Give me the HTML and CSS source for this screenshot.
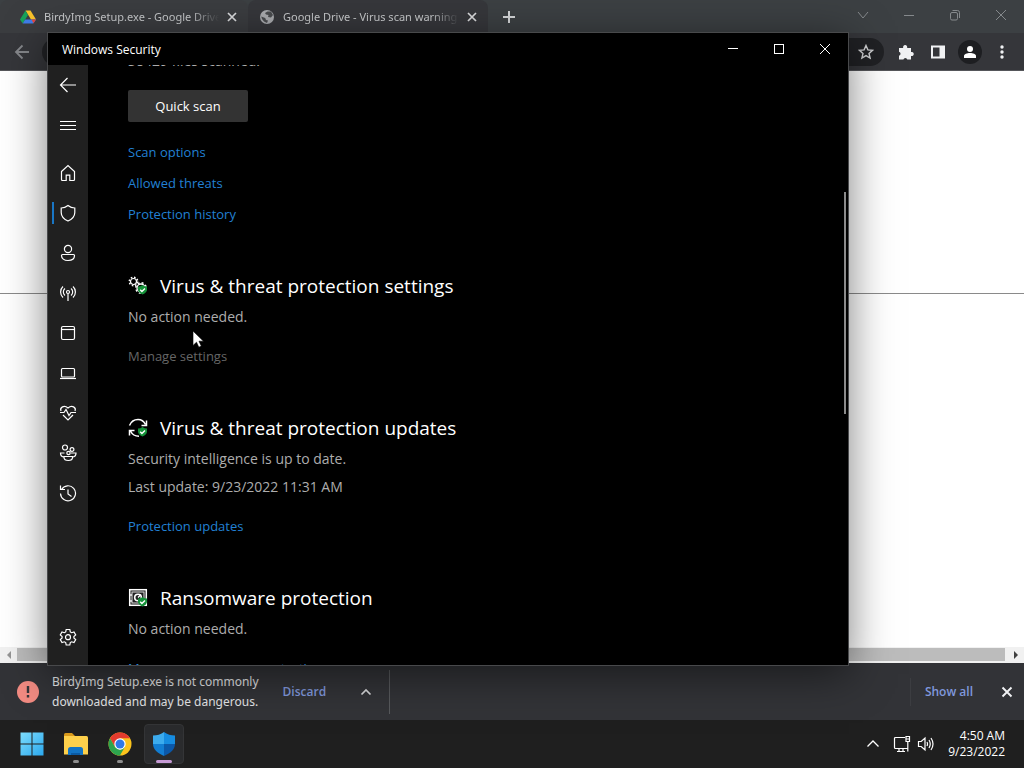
FILE: index.html
```html
<!DOCTYPE html>
<html lang="en">
<head>
<meta charset="utf-8">
<title>Windows Security</title>
<link rel="stylesheet" href="styles.css">
</head>
<body>
<div class="desktop">
  <div class="browser">
    <header class="tabstrip">
      <div class="tab tab-active">
        <svg class="favicon" viewBox="0 0 16 16"><path d="M5.500 1.500h5L16 10.500h-5z" fill="#f9c32b"/><path d="M5.500 1.500 8 6 2.700 14.500 0 10.500z" fill="#18a35a"/><path d="M5.200 10.500H16l-2.700 4H2.700z" fill="#3f7de8"/><path d="M13.500 14.300 16 10.500h-4.500z" fill="#e8453c"/></svg>
        <span class="tab-title">BirdyImg Setup.exe - Google Drive</span>
        <button class="icon-btn tab-close" aria-label="Close tab"><svg width="10" height="10" viewBox="0 0 10 10"><path d="M1 1l8 8M9 1l-8 8" stroke="#dcdddf" stroke-width="1.700"/></svg></button>
      </div>
      <div class="tab">
        <svg class="favicon" viewBox="0 0 16 16"><circle cx="8" cy="8" r="7" fill="#a9abae"/><path d="M8.500 2.500 6 4l1 1.500 2.500.5-.5 2 3 .5 2-2.500-2-3.500zM2.200 7.500l4 1.500.8 2 2 .5-1 2.500-3-1.500-2-2.500z" fill="#4a4c4f"/></svg>
        <span class="tab-title">Google Drive - Virus scan warning</span>
        <button class="icon-btn tab-close" aria-label="Close tab"><svg width="10" height="10" viewBox="0 0 10 10"><path d="M1 1l8 8M9 1l-8 8" stroke="#dcdddf" stroke-width="1.700"/></svg></button>
      </div>
      <button class="icon-btn new-tab" aria-label="New tab"><svg width="14" height="14" viewBox="0 0 14 14"><path d="M7 1v12M1 7h12" stroke="#d5d7d9" stroke-width="2"/></svg></button>
      <div class="browser-controls">
        <button class="icon-btn caption-btn" aria-label="Search tabs"><svg width="12" height="12" viewBox="0 0 12 12"><path d="M1 3l5 6 5-6" class="dim"/></svg></button>
        <button class="icon-btn caption-btn" aria-label="Minimize"><svg width="12" height="12" viewBox="0 0 12 12"><path d="M1 6.500h10" class="dim"/></svg></button>
        <button class="icon-btn caption-btn" aria-label="Restore"><svg width="12" height="12" viewBox="0 0 12 12"><rect x="1.500" y="3.500" width="7" height="7.500" rx="1.500" class="dim"/><path d="M3.500 1.500h5a2 2 0 0 1 2 2V9" class="dim"/></svg></button>
        <button class="icon-btn caption-btn" aria-label="Close"><svg width="12" height="12" viewBox="0 0 12 12"><path d="M1 1l10 10M11 1L1 11" class="dim"/></svg></button>
      </div>
    </header>
    <div class="toolbar">
      <button class="icon-btn tool-btn" aria-label="Back"><svg width="16" height="16" viewBox="0 0 16 16"><path d="M15 8H2M8.500 1.500 2 8l6.500 6.500" stroke="#84868a" stroke-width="1.800" fill="none"/></svg></button>
      <div class="omnibox">
        <button class="icon-btn tool-btn" aria-label="Bookmark"><svg width="16" height="16" viewBox="0 0 16 16"><path d="m8 1.500 1.900 4.400 4.700.4-3.600 3.100 1.100 4.700L8 11.600l-4.100 2.500L5 9.400 1.400 6.300l4.700-.4z" stroke="#d0d1d3" stroke-width="1.400" fill="none"/></svg></button>
      </div>
      <button class="icon-btn tool-btn" aria-label="Extensions"><svg width="16" height="16" viewBox="0 0 16 16"><path d="M1 4h4.200a2.100 2.100 0 1 1 3.900 0H13v4a2.100 2.100 0 1 1 0 4v3.500H9.300a2 2 0 0 0-3.900 0H1v-3.800a2 2 0 0 0 0-3.900z" fill="#f1f2f4"/></svg></button>
      <button class="icon-btn tool-btn" aria-label="Side panel"><svg width="16" height="16" viewBox="0 0 16 16"><path d="M1 1.500h14v13H1zM3 3.500v9h6.500v-9z" fill="#f1f2f4" fill-rule="evenodd"/></svg></button>
      <button class="icon-btn tool-btn avatar" aria-label="Profile"><svg width="14" height="14" viewBox="0 0 14 14"><circle cx="7" cy="4" r="3" fill="#fff"/><path d="M1 13v-2c0-2 3-3 6-3s6 1 6 3v2z" fill="#fff"/></svg></button>
      <button class="icon-btn tool-btn" aria-label="Menu"><svg width="16" height="16" viewBox="0 0 16 16"><g fill="#f1f2f4"><circle cx="8" cy="3" r="1.700"/><circle cx="8" cy="8" r="1.700"/><circle cx="8" cy="13" r="1.700"/></g></svg></button>
    </div>
    <main class="page"><hr class="rule"></main>
    <div class="hscroll">
      <button class="icon-btn hs-btn" aria-label="Scroll left"><svg width="6" height="8" viewBox="0 0 6 8"><path d="M5 0v8L1 4z" fill="#949494"/></svg></button>
      <div class="hs-thumb"></div>
      <button class="icon-btn hs-btn" aria-label="Scroll right"><svg width="6" height="8" viewBox="0 0 6 8"><path d="M1 0v8l4-4z" fill="#404040"/></svg></button>
    </div>
    <section class="downloads">
      <svg class="warn" viewBox="0 0 22 22"><circle cx="11" cy="11" r="11" fill="#f28b82"/><path d="M11 5v7M11 14v2.500" stroke="#35363a" stroke-width="2.400"/></svg>
      <p class="dl-text">BirdyImg Setup.exe is not commonly<br>downloaded and may be dangerous.</p>
      <button class="text-btn discard">Discard</button>
      <button class="icon-btn dl-more" aria-label="More options"><svg width="12" height="8" viewBox="0 0 12 8"><path d="M1.500 6.500 6 2l4.500 4.500" stroke="#d8d9db" stroke-width="1.700" fill="none"/></svg></button>
      <div class="show-wrap">
        <button class="text-btn">Show all</button>
        <button class="icon-btn dl-close" aria-label="Close downloads"><svg width="12" height="12" viewBox="0 0 12 12"><path d="M1.500 1.500l9 9M10.500 1.500l-9 9" stroke="#f1f2f4" stroke-width="1.900"/></svg></button>
      </div>
    </section>
  </div>

  <footer class="taskbar">
    <nav class="apps">
      <button class="icon-btn app" aria-label="Start"><svg width="24" height="24" viewBox="0 0 24 24"><defs><linearGradient id="win" x2="1" y2="1"><stop stop-color="#7ddcfb"/><stop offset="1" stop-color="#2ba8ee"/></linearGradient></defs><path d="M.5.5h11v11H.500zM12.500.5h11v11h-11zM.5 12.500h11v11H.500zM12.500 12.500h11v11h-11z" fill="url(#win)"/></svg></button>
      <button class="icon-btn app running" aria-label="File Explorer"><svg width="26" height="24" viewBox="0 0 26 24"><path d="M1 2.500Q1 1 2.500 1H9l3 3H1z" fill="#d99a1c"/><path d="M1 4h22.500Q25 4 25 5.500V22.500H1z" fill="#fdd04b"/><path d="M5 23v-5.500Q5 15 7.500 15h10q2.500 0 2.500 2.500V23z" fill="#1374c4"/><path d="M8 21h9v2H8z" fill="#0b5aa2"/></svg></button>
      <button class="icon-btn app running" aria-label="Chrome"><svg width="24" height="24" viewBox="0 0 24 24"><circle cx="12" cy="12" r="11.500" fill="#fbc31c"/><path d="M2 6.300A11.500 11.500 0 0 1 22 6.300H12L7 14.900z" fill="#e33b2e"/><path d="M2 6.300 7 14.900 12 17.700 16.900 15 11.900 23.500A11.500 11.500 0 0 1 2 6.300z" fill="#2da44e"/><circle cx="12" cy="12" r="5.700" fill="#fff"/><circle cx="12" cy="12" r="4.500" fill="#2f79e6"/></svg></button>
      <button class="icon-btn app current" aria-label="Windows Security"><svg width="24" height="24" viewBox="0 0 24 24"><path d="M12 0C9 2.500 5 3.500 1 3.500V12h11z" fill="#3cabed"/><path d="M12 0c3 2.500 7 3.500 11 3.500V12H12z" fill="#168ce0"/><path d="M1 12h11v12C5 21 1 17 1 12z" fill="#127dd2"/><path d="M23 12H12v12c7-3 11-7 11-12z" fill="#0b58a9"/></svg></button>
    </nav>
    <div class="tray">
      <button class="icon-btn" aria-label="Show hidden icons"><svg width="14" height="10" viewBox="0 0 14 10"><path d="M1.500 7.500 7 2l5.500 5.500" stroke="#fff" stroke-width="1.300" fill="none"/></svg></button>
      <div class="status">
        <svg width="18" height="18" viewBox="0 0 18 18" class="tray-icon"><path d="M12 2.500H2.500a1 1 0 0 0-1 1v9a1 1 0 0 0 1 1H15M6 13.500v3M10 13.500v3M4 16.500h8M13 1.500h3.500v5H13zM13 4h3.500M14.800 6.500v10"/></svg>
        <svg width="18" height="18" viewBox="0 0 18 18" class="tray-icon"><path d="M1.500 6.500h2.700L8 3v12l-3.800-3.500H1.500zM10 7q1 2 0 4M12 5q2.500 4 0 8M14 3q4 6 0 12"/></svg>
      </div>
      <time class="clock">4:50 AM<br>9/23/2022</time>
    </div>
  </footer>

  <div class="window">
    <header class="titlebar">
      <h1 class="win-title">Windows Security</h1>
      <button class="icon-btn win-btn" aria-label="Minimize"><svg width="12" height="12" viewBox="0 0 12 12"><path d="M1 5.500h10" class="bright"/></svg></button>
      <button class="icon-btn win-btn" aria-label="Maximize"><svg width="12" height="12" viewBox="0 0 12 12"><rect x="1.500" y="1.500" width="9" height="9" class="bright"/></svg></button>
      <button class="icon-btn win-btn" aria-label="Close"><svg width="12" height="12" viewBox="0 0 12 12"><path d="M1 1l10 10M11 1L1 11" class="bright"/></svg></button>
    </header>
    <div class="win-body">
      <nav class="sidebar">
        <button class="icon-btn side-btn" aria-label="Back"><svg viewBox="0 0 18 18"><path d="M17 9H1.500M8.500 2l-7 7 7 7"/></svg></button>
        <button class="icon-btn side-btn menu-btn" aria-label="Open navigation"><svg viewBox="0 0 18 18"><path d="M1 5.500h16M1 9.500h16M1 13.500h16"/></svg></button>
        <button class="icon-btn side-btn" aria-label="Home"><svg viewBox="0 0 18 18"><path d="M2.500 7.500 9 1.500l6.500 6v8a1 1 0 0 1-1 1h-3.700v-5.300H7.200v5.300H3.500a1 1 0 0 1-1-1z"/></svg></button>
        <button class="icon-btn side-btn selected" aria-label="Virus &amp; threat protection"><svg viewBox="0 0 18 18"><path d="M9 1.500Q12 4 15.800 4v4.500Q15.800 14 9 17 2.200 14 2.200 8.500V4Q6 4 9 1.500z"/></svg></button>
        <button class="icon-btn side-btn" aria-label="Account protection"><svg viewBox="0 0 18 18"><circle cx="9" cy="5" r="3.600"/><path d="M3.500 10.500h11a1 1 0 0 1 1 1c0 3-2.500 5-6.500 5s-6.500-2-6.500-5a1 1 0 0 1 1-1z"/></svg></button>
        <button class="icon-btn side-btn" aria-label="Firewall &amp; network protection"><svg viewBox="0 0 18 18"><circle cx="9" cy="8" r="1.500"/><path d="M9 9.500V17M6 11.500a4.500 4.500 0 0 1 0-7M12 11.500a4.500 4.500 0 0 0 0-7M4 13.500a7.500 7.500 0 0 1 0-11M14 13.500a7.500 7.500 0 0 0 0-11"/></svg></button>
        <button class="icon-btn side-btn" aria-label="App &amp; browser control"><svg viewBox="0 0 18 18"><rect x="2.500" y="2.500" width="13" height="13" rx="1.500"/><path d="M2.500 5.500h13"/></svg></button>
        <button class="icon-btn side-btn" aria-label="Device security"><svg viewBox="0 0 18 18"><rect x="2.500" y="4.500" width="13" height="8.500" rx="1"/><path d="M1 14.500h16"/></svg></button>
        <button class="icon-btn side-btn" aria-label="Device performance &amp; health"><svg viewBox="0 0 18 18"><path d="M2 7C.5 3.500 5 .500 9 4 13 .500 17.500 3.500 16 7M1 8.500h4l2-3 3 6 2-3h5M4 11l5 5 5-5"/></svg></button>
        <button class="icon-btn side-btn" aria-label="Family options"><svg viewBox="0 0 18 18"><circle cx="6" cy="3.500" r="2.500"/><circle cx="13" cy="5.500" r="1.900"/><circle cx="9.500" cy="9" r="1.700"/><path d="M5 12.500h8.500v1q0 3-4.200 3T5 13.500zM5.500 9H1.500q0 3.500 3 4M12 9h5q0 3.500-3 4"/></svg></button>
        <button class="icon-btn side-btn" aria-label="Protection history"><svg viewBox="0 0 18 18"><path d="M2.500 5.500A7.500 7.500 0 1 1 1.500 9.500M1.500 1.500v4h4.500M9 5.500V10l3.500 2.500"/></svg></button>
        <button class="icon-btn side-btn settings-btn" aria-label="Settings"><svg viewBox="0 0 18 18"><path d="M7.200 1.500h3.600l.5 2.400 1.300.8 2.400-.8 1.700 3-1.800 1.600v1.500l1.800 1.600-1.700 3-2.400-.8-1.300.8-.5 2.400H7.200l-.5-2.400-1.300-.8-2.400.8-1.700-3L3.100 10V8.500L1.300 6.900l1.700-3 2.400.8 1.300-.8z"/><circle cx="9" cy="9.200" r="2.500"/></svg></button>
      </nav>
      <div class="content">
        <p class="files">38429 files scanned.</p>
        <button class="scan-btn">Quick scan</button>
        <div class="links">
          <a href="#">Scan options</a>
          <a href="#">Allowed threats</a>
          <a href="#">Protection history</a>
        </div>
        <section class="group">
          <h2><svg class="head-icon" viewBox="0 0 20 20"><circle cx="5.500" cy="5.500" r="3" stroke="#fff" stroke-width="1.200" fill="none"/><circle cx="5.500" cy="5.500" r="4.200" stroke="#fff" stroke-width="1.500" stroke-dasharray="1.600 1.700" fill="none"/><circle cx="13" cy="12" r="4" stroke="#fff" stroke-width="1.300" fill="none"/><circle cx="13" cy="12" r="5.200" stroke="#fff" stroke-width="1.500" stroke-dasharray="2 2.080" fill="none"/><path d="M14.500 9q2 1.500 4.500 1.500v3q0 3-4.500 5-4.500-2-4.500-5v-3Q12.500 10.500 14.500 9z" fill="#149138"/><path d="m12.200 13.800 1.700 1.700 3.100-3.100" stroke="#fff" stroke-width="1.400" fill="none"/></svg>Virus &amp; threat protection settings</h2>
          <p>No action needed.</p>
          <a href="#" class="disabled" aria-disabled="true">Manage settings</a>
        </section>
        <section class="group">
          <h2><svg class="head-icon" viewBox="0 0 20 20"><path d="M1.500 7.500Q4 1.500 10 1.500q5 0 7.500 5M18.500 2.500v5h-5M1.500 17.500v-5h5M2.500 13Q5 18.300 11 18.300" stroke="#fff" stroke-width="1.500" fill="none"/><path d="M14.500 9q2 1.500 4.500 1.500v3q0 3-4.500 5-4.500-2-4.500-5v-3Q12.500 10.500 14.500 9z" fill="#149138"/><path d="m12.200 13.800 1.700 1.700 3.100-3.100" stroke="#fff" stroke-width="1.400" fill="none"/></svg>Virus &amp; threat protection updates</h2>
          <p>Security intelligence is up to date.</p>
          <p>Last update: 9/23/2022 11:31 AM</p>
          <a href="#">Protection updates</a>
        </section>
        <section class="group">
          <h2><svg class="head-icon" viewBox="0 0 20 20"><rect x="1.700" y="1.700" width="16.600" height="15.600" stroke="#fff" stroke-width="1.500" fill="#222"/><rect x="4" y="4" width="12" height="11" stroke="#ddd" fill="none"/><circle cx="10" cy="9.500" r="3.300" stroke="#fff" stroke-width="1.600" fill="none"/><path d="M10 9.500l3-3M3 6v2M3 12v2" stroke="#fff" stroke-width="1.300"/><path d="M14.500 9q2 1.500 4.500 1.500v3q0 3-4.500 5-4.500-2-4.500-5v-3Q12.500 10.500 14.500 9z" fill="#149138"/><path d="m12.200 13.800 1.700 1.700 3.100-3.100" stroke="#fff" stroke-width="1.400" fill="none"/></svg>Ransomware protection</h2>
          <p>No action needed.</p>
          <a href="#">Manage ransomware protection</a>
        </section>
      </div>
      <div class="vscroll"></div>
    </div>
  </div>
  <svg class="cursor" viewBox="0 0 12 18"><path d="M1 1v14.500l3.500-3.300 2.300 5 2.500-1.100-2.300-4.900H11.500z" fill="#fff" stroke="#000" stroke-width=".6"/></svg>
</div>
</body>
</html>
```
FILE: styles.css
```css
* { box-sizing: border-box; }

body {
  margin: 0;
  font-family: "Open Sans", "Noto Sans", sans-serif;
  font-size: 13px;
  line-height: 20px;
}

button { font: inherit; color: inherit; }
p, h1, h2 { margin: 0; font-weight: 400; }
a { color: #2280d4; text-decoration: none; }

.icon-btn {
  display: flex;
  align-items: center;
  justify-content: center;
  flex: none;
  padding: 0;
  border: 0;
  background: none;
}

.desktop {
  position: relative;
  display: flex;
  flex-direction: column;
  height: 100vh;
  overflow: hidden;
}

/* Browser */
.browser { flex: 1; display: flex; flex-direction: column; min-height: 0; }

.tabstrip { display: flex; height: 33px; background: #3c4043; color: #c8cacc; }
.tab {
  display: flex;
  align-items: center;
  gap: 8px;
  width: 240px;
  padding: 0 11px;
  background: #36373b;
  border-radius: 8px 8px 0 0;
  font-family: "Noto Sans", "Open Sans", sans-serif;
  font-size: 11px;
}
.tab-active { width: 248px; padding-left: 20px; background: #3b3d40; }
.favicon { flex: none; width: 16px; height: 16px; }
.tab-title {
  flex: 1;
  overflow: hidden;
  white-space: nowrap;
  -webkit-mask-image: linear-gradient(to left, transparent, #000 28px);
  mask-image: linear-gradient(to left, transparent, #000 28px);
}
.tab-close { width: 10px; }
.new-tab { width: 42px; }
.browser-controls { display: flex; margin-left: auto; }
.caption-btn { width: 46px; height: 30px; }
.dim { stroke: #85898c; fill: none; }

.toolbar {
  display: flex;
  align-items: center;
  gap: 8px;
  height: 38px;
  padding: 0 10px;
  background: #35363a;
  border-bottom: 1px solid #55565a;
}
.tool-btn { width: 24px; height: 24px; }
.omnibox {
  flex: 1;
  display: flex;
  align-items: center;
  justify-content: flex-end;
  height: 28px;
  margin-right: 2px;
  padding-right: 6px;
  border-radius: 14px;
  background: #202124;
}
.avatar { border-radius: 50%; background: #1d1e21; }

.page { flex: 1; min-height: 0; padding-top: 222px; background: #fff; }
.rule { margin: 0; border: 0; border-top: 1px solid #8a8a8a; }

.hscroll { display: flex; height: 16px; background: #f1f1f1; }
.hs-btn { width: 17px; }
.hs-thumb { flex: 1; margin: 1px 2px 2px 0; background: #bcbcbc; }

.downloads {
  display: flex;
  align-items: center;
  height: 57px;
  padding: 0 11px 0 17px;
  background: #323337;
  color: #e2e3e5;
}
.warn { width: 22px; height: 22px; margin-right: 13px; }
.dl-text { font-family: "Noto Sans", "Open Sans", sans-serif; font-size: 12px; white-space: nowrap; }
.text-btn { padding: 0; border: 0; background: none; color: #8098dc; font-size: 12px; font-weight: 600; }
.discard { margin-left: 24px; }
.dl-more { justify-content: flex-start; width: 64px; height: 44px; padding-left: 34px; border-right: 1px solid #57595c; }
.show-wrap { display: flex; align-items: center; gap: 28px; height: 28px; margin-left: auto; padding-left: 14px; border-left: 1px solid #3c3d41; }
.dl-close { width: 12px; }

/* Taskbar */
.taskbar {
  display: flex;
  align-items: center;
  justify-content: space-between;
  height: 48px;
  padding: 0 19px 0 12px;
  background: #1f1f1f;
  color: #fff;
}
.apps { display: flex; gap: 4px; }
.app { position: relative; width: 40px; height: 40px; border-radius: 4px; }
.running::after, .current::after {
  content: "";
  position: absolute;
  bottom: 1px;
  left: 50%;
  width: 6px;
  height: 3px;
  border-radius: 2px;
  background: #8e8e8e;
  transform: translateX(-50%);
}
.current { background: #2a2b2d; border: 1px solid #343537; }
.current::after { bottom: 0; width: 16px; background: #c79bd6; }
.tray { display: flex; align-items: center; gap: 13px; }
.status { display: flex; gap: 6px; }
.tray-icon { fill: none; stroke: #fff; stroke-width: 1.2px; }
.clock { font-size: 12px; line-height: 16px; text-align: right; }

/* Security window */
.window {
  position: absolute;
  top: 32px;
  right: 175px;
  bottom: 102px;
  left: 47px;
  display: flex;
  flex-direction: column;
  border: 1px solid #48494b;
  background: #000;
  color: #fff;
  box-shadow: 0 8px 40px rgba(0, 0, 0, .5);
}
.titlebar { display: flex; height: 32px; padding-left: 14px; }
.win-title { flex: 1; font-size: 12px; line-height: 34px; }
.win-btn { width: 46px; }
.bright { stroke: #fff; fill: none; }

.win-body { flex: 1; display: flex; min-height: 0; }
.sidebar { display: flex; flex-direction: column; width: 40px; padding-bottom: 8px; background: #202020; }
.side-btn { position: relative; width: 40px; height: 40px; }
.side-btn svg { width: 18px; height: 18px; fill: none; stroke: #fff; stroke-width: 1.2px; }
.menu-btn { margin-bottom: 8px; }
.settings-btn { margin-top: auto; }
.selected::before {
  content: "";
  position: absolute;
  left: 4px;
  width: 2px;
  height: 22px;
  background: #1976c5;
}

.content { flex: 1; min-width: 0; padding: 0 40px; overflow: hidden; }
.files { margin-top: -14px; }
.files, .group p { color: #adadad; font-size: 14px; }
.scan-btn {
  display: block;
  width: 120px;
  height: 32px;
  margin: 19px 0 20px;
  border: 0;
  border-radius: 2px;
  background: #333;
  color: #fff;
}
.links { display: flex; flex-direction: column; align-items: flex-start; gap: 11px; }
.group { margin-top: 48px; }
.group h2 { display: flex; align-items: center; gap: 12px; margin-bottom: 7px; font-size: 19px; line-height: 28px; }
.head-icon { flex: none; width: 20px; height: 20px; }
.group p + p { margin-top: 8px; }
.group a { display: block; margin-top: 19px; }
.group .disabled { color: #666; }

.vscroll { align-self: flex-start; width: 2px; height: 222px; margin: 127px 2px 0 0; background: #8a8a8a; }

.cursor { position: absolute; top: 330px; left: 192px; width: 12px; height: 18px; }
```
